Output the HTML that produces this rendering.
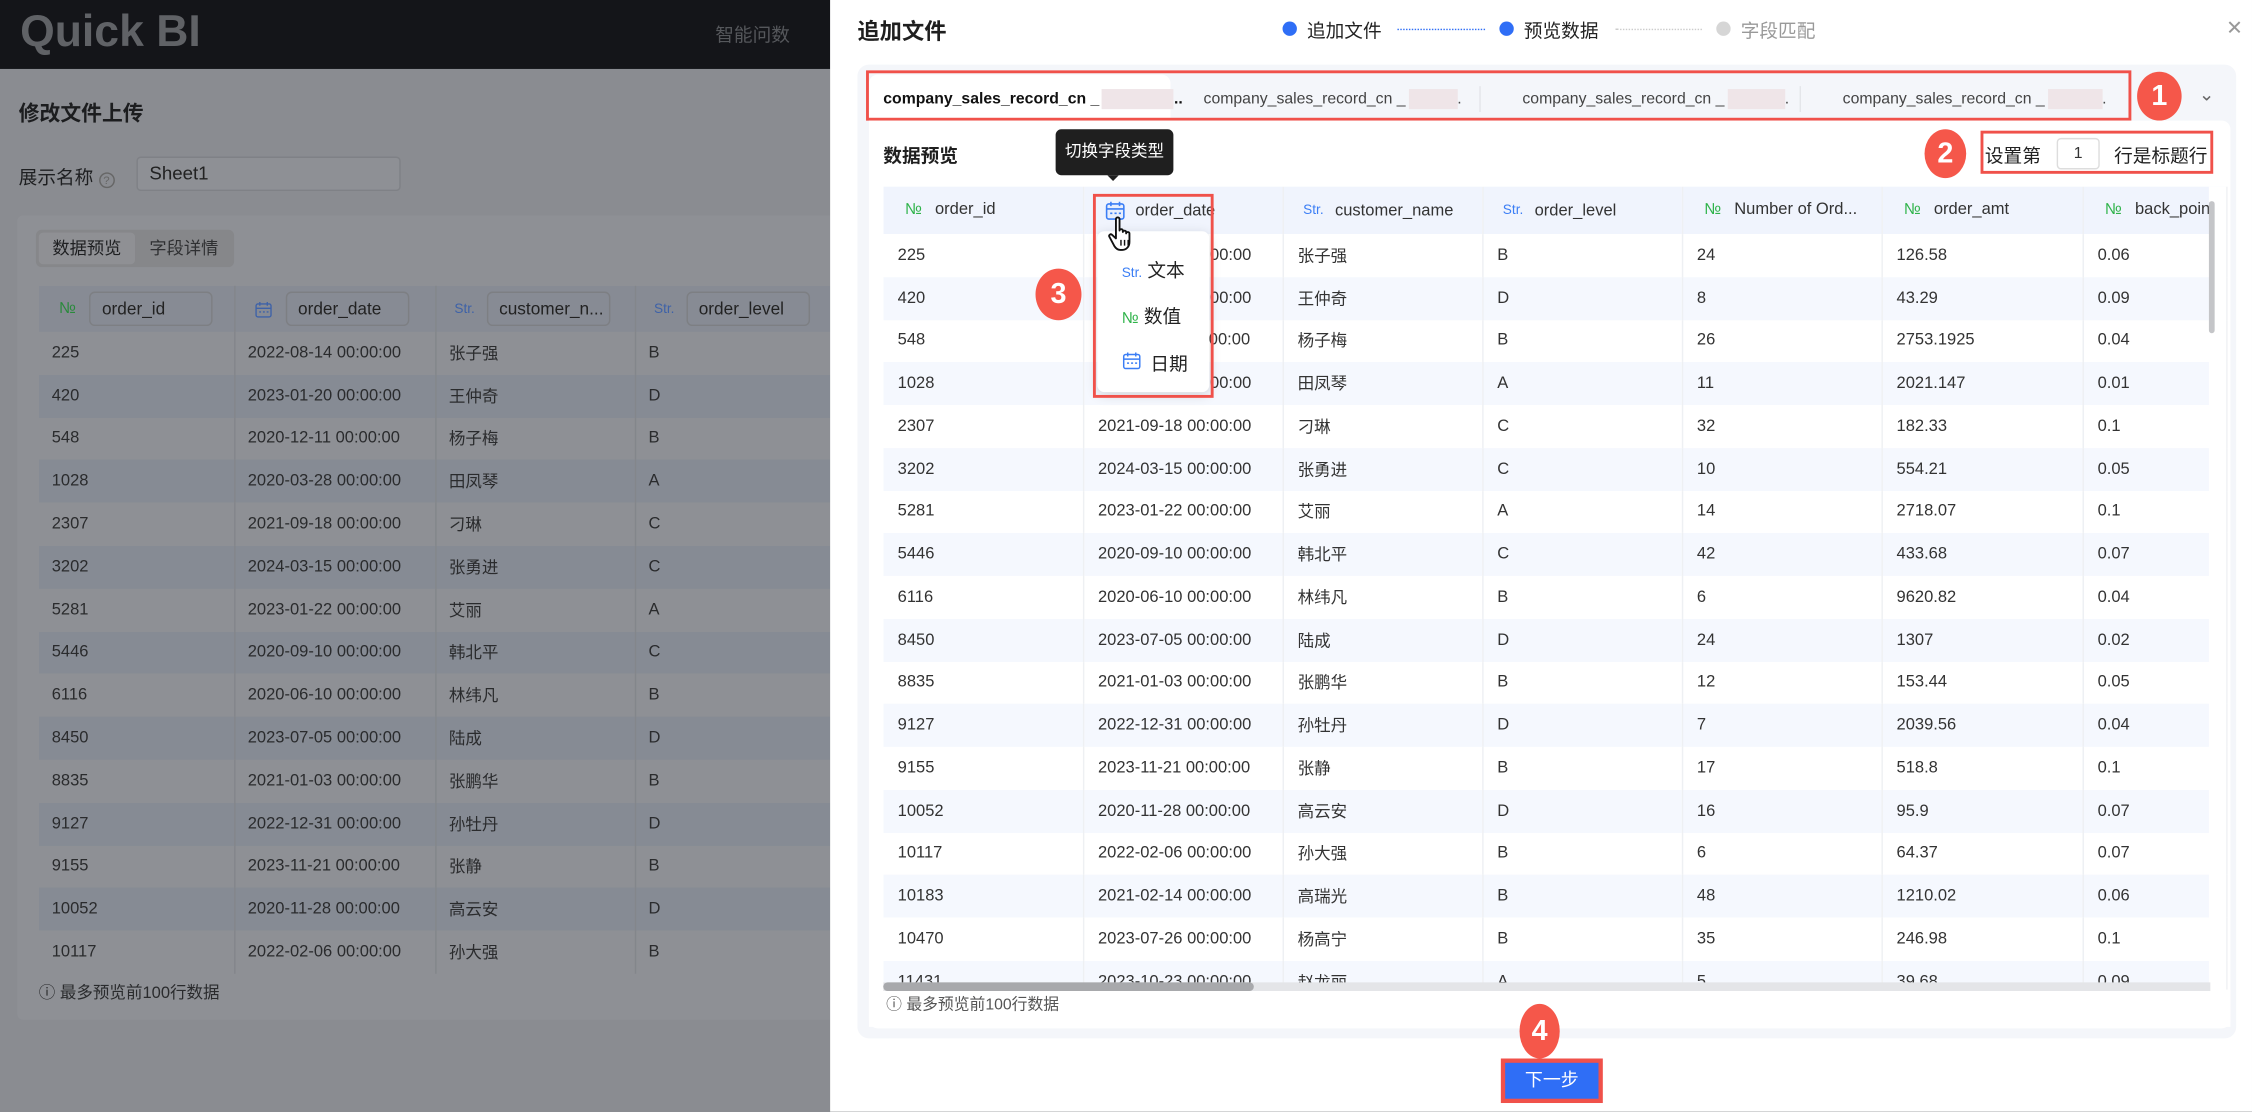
<!DOCTYPE html>
<html><head><meta charset="utf-8">
<style>
*{box-sizing:border-box;margin:0;padding:0}
html,body{width:2252px;height:1112px;overflow:hidden;background:#8a8c91}
#w{position:absolute;left:0;top:0;width:1568px;height:774px;transform:scale(1.43622);transform-origin:0 0;font-family:"Liberation Sans","Noto Sans CJK SC",sans-serif;color:#333;font-size:12px}
.a{position:absolute}
.hdr{left:0;top:0;width:578px;height:48px;background:#141519}
.logo{left:14px;top:4px;font-size:31px;font-weight:bold;color:#5a5c60;letter-spacing:-0.5px}
.lcard{left:12px;top:150px;width:570px;height:560px;background:#8e9095;border-radius:4px}
table{border-collapse:collapse;table-layout:fixed}
td{white-space:nowrap;overflow:hidden;padding-left:9px;font-size:11.5px}
.lt{left:27px;top:199px;width:560px}
.lt td{height:29.8px;border-right:1px solid #83868b;color:#2a2b2d}
.lt tr:nth-child(odd) td{background:#868b94}
.lt tr.h td{height:32px;background:#878b94}
.lin{display:inline-block;vertical-align:middle;border:1px solid #7d7f83;border-radius:4px;height:24px;line-height:22px;padding-left:8px;width:86px;color:#222;font-size:12px}
.rt{left:615px;top:130px;width:935px}
.rt td{height:29.75px;border-right:1px solid #eef0f3;color:#333;padding-left:10px}
.rt tr:nth-child(odd) td{background:#f5f8fe}
.rt tr.h td{height:33px;background:#f0f4fd}
.ic{display:inline-block;width:22px;font-size:10px;margin-right:4px;text-align:center;vertical-align:middle}
.no{color:#2fb34a;font-size:11px}.st{color:#3b7ef5;font-size:9.5px}
.red{border:2px solid #f0514a}
.cir{position:absolute;background:#f5574a;color:#fff;font-weight:bold;font-size:20px;text-align:center;border-radius:50%}
.tab{font-size:11px}
</style></head><body><div id="w">
<div class="a hdr"></div>
<div class="a logo" style="color:#606266;letter-spacing:0">Quick BI</div>
<div class="a" style="left:498px;top:14px;font-size:13px;color:#55575b">智能问数</div>
<div class="a" style="left:13px;top:68px;font-size:14.5px;font-weight:bold;color:#1c1d1f">修改文件上传</div>
<div class="a" style="left:13px;top:113px;font-size:13px;color:#1e1f21">展示名称 <span style="display:inline-block;width:11px;height:11px;border:1px solid #666;border-radius:50%;font-size:8px;text-align:center;line-height:9px;color:#666">?</span></div>
<div class="a" style="left:95px;top:109px;width:184px;height:24px;border:1px solid #7f8186;border-radius:3px;background:#8e9095;padding-left:8px;line-height:22px;font-size:13px;color:#222">Sheet1</div>
<div class="a lcard"></div>
<div class="a" style="left:25px;top:160px;width:138px;height:26px;background:#86878a;border-radius:4px"></div>
<div class="a" style="left:27px;top:162px;width:67px;height:22px;background:#8f9094;border-radius:3px;line-height:22px;text-align:center;font-size:12px;color:#1e1f21">数据预览</div>
<div class="a" style="left:104px;top:162px;line-height:22px;font-size:12px;color:#2f3032">字段详情</div>
<table class="a lt">
<colgroup><col style="width:136px"><col style="width:140px"><col style="width:139px"><col style="width:145px"></colgroup>
<tr class="h"><td><span class="ic no" style="color:#2a8a3c">№</span><span class="lin">order_id</span></td><td><span class="ic"><svg width="13" height="13" viewBox="0 0 15 15" style="vertical-align:middle"><rect x="1.5" y="3" width="12" height="10.5" rx="1.5" fill="none" stroke="#3e62a8" stroke-width="1.1"/><path d="M1.5 6.5h12M4.5 1.5v3M10.5 1.5v3M4 9.5h1.5M7 9.5h1.5M10 9.5h1.5" stroke="#3e62a8" stroke-width="1.1" fill="none"/></svg></span><span class="lin">order_date</span></td><td><span class="ic st" style="color:#3e62a8">Str.</span><span class="lin">customer_n...</span></td><td><span class="ic st" style="color:#3e62a8">Str.</span><span class="lin">order_level</span></td></tr>
<tr><td>225</td><td>2022-08-14 00:00:00</td><td>张子强</td><td>B</td></tr>
<tr><td>420</td><td>2023-01-20 00:00:00</td><td>王仲奇</td><td>D</td></tr>
<tr><td>548</td><td>2020-12-11 00:00:00</td><td>杨子梅</td><td>B</td></tr>
<tr><td>1028</td><td>2020-03-28 00:00:00</td><td>田凤琴</td><td>A</td></tr>
<tr><td>2307</td><td>2021-09-18 00:00:00</td><td>刁琳</td><td>C</td></tr>
<tr><td>3202</td><td>2024-03-15 00:00:00</td><td>张勇进</td><td>C</td></tr>
<tr><td>5281</td><td>2023-01-22 00:00:00</td><td>艾丽</td><td>A</td></tr>
<tr><td>5446</td><td>2020-09-10 00:00:00</td><td>韩北平</td><td>C</td></tr>
<tr><td>6116</td><td>2020-06-10 00:00:00</td><td>林纬凡</td><td>B</td></tr>
<tr><td>8450</td><td>2023-07-05 00:00:00</td><td>陆成</td><td>D</td></tr>
<tr><td>8835</td><td>2021-01-03 00:00:00</td><td>张鹏华</td><td>B</td></tr>
<tr><td>9127</td><td>2022-12-31 00:00:00</td><td>孙牡丹</td><td>D</td></tr>
<tr><td>9155</td><td>2023-11-21 00:00:00</td><td>张静</td><td>B</td></tr>
<tr><td>10052</td><td>2020-11-28 00:00:00</td><td>高云安</td><td>D</td></tr>
<tr><td>10117</td><td>2022-02-06 00:00:00</td><td>孙大强</td><td>B</td></tr>
</table>
<div class="a" style="left:27px;top:683px;font-size:11.5px;color:#2a2b2d">ⓘ 最多预览前100行数据</div>

<div class="a" style="left:578px;top:0;width:990px;height:774px;background:#fff"></div>
<div class="a" style="left:597px;top:10px;font-size:15.5px;font-weight:bold;color:#1f1f1f">追加文件</div>
<div class="a" style="left:893px;top:15px;width:10px;height:10px;border-radius:50%;background:#2f6ef6"></div>
<div class="a" style="left:910px;top:11px;font-size:13px;color:#222">追加文件</div>
<div class="a" style="left:973px;top:20px;width:61px;border-top:1px dotted #2f6ef6"></div>
<div class="a" style="left:1044px;top:15px;width:10px;height:10px;border-radius:50%;background:#2f6ef6"></div>
<div class="a" style="left:1061px;top:11px;font-size:13px;color:#222">预览数据</div>
<div class="a" style="left:1125px;top:20px;width:60px;border-top:1px dotted #ccc"></div>
<div class="a" style="left:1195px;top:15px;width:10px;height:10px;border-radius:50%;background:#d6d6d6"></div>
<div class="a" style="left:1212px;top:11px;font-size:13px;color:#999">字段匹配</div>
<div class="a" style="left:1550px;top:11px;font-size:14px;color:#999">✕</div>

<div class="a" style="left:597px;top:45px;width:960px;height:678px;background:#f4f6fa;border-radius:8px"></div>
<div class="a" style="left:605px;top:52px;width:210px;height:32px;background:#fff;border-radius:6px 6px 0 0"></div>
<div class="a tab" style="left:615px;top:62px;color:#111;font-weight:bold">company_sales_record_cn _<span style="display:inline-block;width:50px;height:14px;background:#efe5e8;vertical-align:middle;margin-left:2px"></span>..</div>
<div class="a tab" style="left:838px;top:62px;color:#444">company_sales_record_cn _<span style="display:inline-block;width:34px;height:14px;background:#efe5e8;vertical-align:middle;margin-left:2px"></span>.</div>
<div class="a tab" style="left:1060px;top:62px;color:#444">company_sales_record_cn _<span style="display:inline-block;width:40px;height:14px;background:#efe5e8;vertical-align:middle;margin-left:2px"></span>.</div>
<div class="a tab" style="left:1283px;top:62px;color:#444">company_sales_record_cn _<span style="display:inline-block;width:38px;height:14px;background:#efe5e8;vertical-align:middle;margin-left:2px"></span>.</div>
<div class="a" style="left:1030px;top:60px;height:18px;border-left:1px solid #e4e6ea"></div>
<div class="a" style="left:1253px;top:60px;height:18px;border-left:1px solid #e4e6ea"></div>
<div class="a" style="left:1531px;top:58px;font-size:13px;color:#666">⌄</div>
<div class="a red" style="left:603px;top:49px;width:881px;height:35px"></div>
<div class="cir" style="left:1488px;top:50px;width:31px;height:34px;line-height:34px">1</div>

<div class="a" style="left:605px;top:84px;width:948px;height:632px;background:#fff;border-radius:0 6px 6px 6px"></div>
<div class="a" style="left:615px;top:98px;font-size:13px;font-weight:bold;color:#1f1f1f">数据预览</div>

<table class="a rt">
<colgroup><col style="width:139px"><col style="width:139px"><col style="width:139px"><col style="width:139px"><col style="width:139px"><col style="width:140px"><col style="width:100px"></colgroup>
<tr class="h"><td><span class="ic no">№</span>order_id</td><td><span class="ic st">&nbsp;</span>order_date</td><td><span class="ic st">Str.</span>customer_name</td><td><span class="ic st">Str.</span>order_level</td><td><span class="ic no">№</span>Number of Ord...</td><td><span class="ic no">№</span>order_amt</td><td><span class="ic no">№</span>back_point</td></tr>
<tr><td>225</td><td>2022-08-14 00:00:00</td><td>张子强</td><td>B</td><td>24</td><td>126.58</td><td>0.06</td></tr>
<tr><td>420</td><td>2023-01-20 00:00:00</td><td>王仲奇</td><td>D</td><td>8</td><td>43.29</td><td>0.09</td></tr>
<tr><td>548</td><td>2020-12-11 00:00:00</td><td>杨子梅</td><td>B</td><td>26</td><td>2753.1925</td><td>0.04</td></tr>
<tr><td>1028</td><td>2020-03-28 00:00:00</td><td>田凤琴</td><td>A</td><td>11</td><td>2021.147</td><td>0.01</td></tr>
<tr><td>2307</td><td>2021-09-18 00:00:00</td><td>刁琳</td><td>C</td><td>32</td><td>182.33</td><td>0.1</td></tr>
<tr><td>3202</td><td>2024-03-15 00:00:00</td><td>张勇进</td><td>C</td><td>10</td><td>554.21</td><td>0.05</td></tr>
<tr><td>5281</td><td>2023-01-22 00:00:00</td><td>艾丽</td><td>A</td><td>14</td><td>2718.07</td><td>0.1</td></tr>
<tr><td>5446</td><td>2020-09-10 00:00:00</td><td>韩北平</td><td>C</td><td>42</td><td>433.68</td><td>0.07</td></tr>
<tr><td>6116</td><td>2020-06-10 00:00:00</td><td>林纬凡</td><td>B</td><td>6</td><td>9620.82</td><td>0.04</td></tr>
<tr><td>8450</td><td>2023-07-05 00:00:00</td><td>陆成</td><td>D</td><td>24</td><td>1307</td><td>0.02</td></tr>
<tr><td>8835</td><td>2021-01-03 00:00:00</td><td>张鹏华</td><td>B</td><td>12</td><td>153.44</td><td>0.05</td></tr>
<tr><td>9127</td><td>2022-12-31 00:00:00</td><td>孙牡丹</td><td>D</td><td>7</td><td>2039.56</td><td>0.04</td></tr>
<tr><td>9155</td><td>2023-11-21 00:00:00</td><td>张静</td><td>B</td><td>17</td><td>518.8</td><td>0.1</td></tr>
<tr><td>10052</td><td>2020-11-28 00:00:00</td><td>高云安</td><td>D</td><td>16</td><td>95.9</td><td>0.07</td></tr>
<tr><td>10117</td><td>2022-02-06 00:00:00</td><td>孙大强</td><td>B</td><td>6</td><td>64.37</td><td>0.07</td></tr>
<tr><td>10183</td><td>2021-02-14 00:00:00</td><td>高瑞光</td><td>B</td><td>48</td><td>1210.02</td><td>0.06</td></tr>
<tr><td>10470</td><td>2023-07-26 00:00:00</td><td>杨高宁</td><td>B</td><td>35</td><td>246.98</td><td>0.1</td></tr>
<tr><td>11431</td><td>2023-10-23 00:00:00</td><td>赵龙丽</td><td>A</td><td>5</td><td>39.68</td><td>0.09</td></tr>
</table>
<div class="a" style="left:605px;top:689px;width:948px;height:26px;background:#fff"></div>
<div class="a" style="left:1538px;top:130px;width:12px;height:560px;background:#fff"></div>
<div class="a" style="left:1538px;top:140px;width:4px;height:92px;background:#c4c5c8;border-radius:2px"></div>
<div class="a" style="left:615px;top:684px;width:924px;height:6px;background:#e4e5e8"></div>
<div class="a" style="left:615px;top:684px;width:258px;height:6px;background:#a8a9ac;border-radius:3px"></div>
<div class="a" style="left:617px;top:691px;font-size:11px;color:#555">ⓘ 最多预览前100行数据</div>

<svg class="a" style="left:769px;top:139px" width="15" height="15" viewBox="0 0 15 15"><rect x="1.5" y="3" width="12" height="10.5" rx="1.5" fill="#e8eefc" stroke="#3b7ef5" stroke-width="1.1"/><path d="M1.5 6.5h12M4.5 1.5v3M10.5 1.5v3M4 9.5h1.5M7 9.5h1.5M10 9.5h1.5" stroke="#3b7ef5" stroke-width="1.1" fill="none"/></svg>
<div class="a" style="left:764px;top:161px;width:78px;height:112px;background:#fff;border-radius:5px;box-shadow:0 2px 8px rgba(0,0,0,.15)"></div>
<div class="a" style="left:781px;top:178px;font-size:13px;color:#222"><span class="st" style="font-size:9.5px">Str.</span> 文本</div>
<div class="a" style="left:781px;top:210px;font-size:13px;color:#222"><span class="no" style="font-size:11px">№</span> 数值</div>
<svg class="a" style="left:781px;top:244px" width="14" height="14" viewBox="0 0 15 15"><rect x="1.5" y="3" width="12" height="10.5" rx="1.5" fill="none" stroke="#3b7ef5" stroke-width="1.1"/><path d="M1.5 6.5h12M4.5 1.5v3M10.5 1.5v3M4 9.5h1.5M7 9.5h1.5M10 9.5h1.5" stroke="#3b7ef5" stroke-width="1.1" fill="none"/></svg>
<div class="a" style="left:801px;top:243px;font-size:13px;color:#222">日期</div>
<svg class="a" style="left:771px;top:150px" width="22" height="26" viewBox="0 0 22 26"><path d="M6 2.5c0-1.5 2.5-1.5 2.5 0v8c0-1.2 2.3-1.2 2.3 0v1c0-1.2 2.3-1.2 2.3 0v1c0-1.2 2.3-1.2 2.3 0v6c0 3-2 5.5-5 5.5H9c-2 0-3-1-4-2.5L1.5 15c-.8-1.2.8-2.5 1.8-1.5L6 16z" fill="#fff" stroke="#111" stroke-width="1.3" stroke-linejoin="round"/><path d="M9.5 17v4M12 17v4M14.5 17v4" stroke="#111" stroke-width="1"/></svg>
<div class="a red" style="left:761px;top:135px;width:84px;height:142px"></div>
<div class="cir" style="left:721px;top:187px;width:32px;height:36px;line-height:36px">3</div>
<div class="a" style="left:735px;top:90px;width:82px;height:32px;background:#1f1f1f;border-radius:4px;color:#fff;font-size:11.5px;line-height:32px;text-align:center">切换字段类型</div>
<div class="a" style="left:771px;top:122px;width:0;height:0;border-left:4px solid transparent;border-right:4px solid transparent;border-top:4px solid #1f1f1f"></div>
<div class="a red" style="left:1379px;top:91px;width:162px;height:30px"></div>
<div class="a" style="left:1382px;top:98px;font-size:13px;color:#222">设置第</div>
<div class="a" style="left:1432px;top:96px;width:30px;height:22px;border:1px solid #ddd;border-radius:3px;text-align:center;line-height:20px;font-size:11px">1</div>
<div class="a" style="left:1472px;top:98px;font-size:13px;color:#222">行是标题行</div>
<div class="cir" style="left:1340px;top:90px;width:29px;height:34px;line-height:34px">2</div>
<div class="cir" style="left:1058px;top:699px;width:28px;height:38px;line-height:38px">4</div>
<div class="a" style="left:1045px;top:737px;width:71px;height:31px;background:#f0514a"></div>
<div class="a" style="left:1048px;top:740px;width:65px;height:25px;background:#2f6ef6;color:#fff;font-size:12.5px;line-height:25px;text-align:center">下一步</div>
</div></body></html>
